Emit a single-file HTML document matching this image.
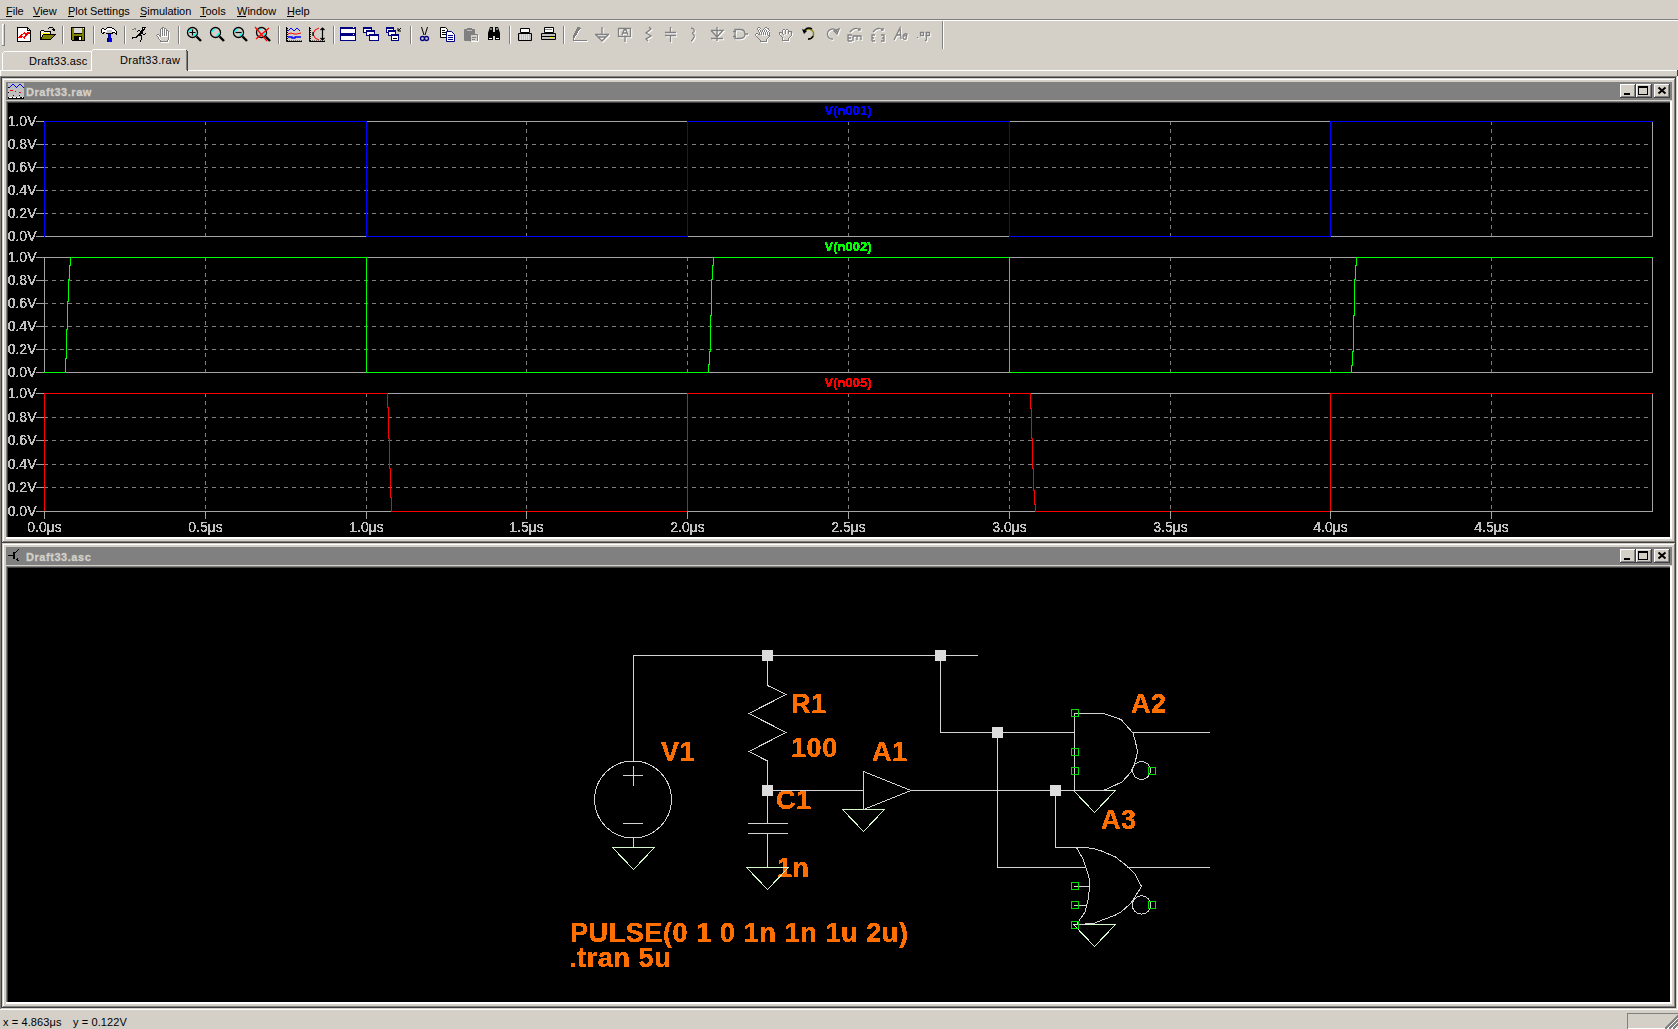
<!DOCTYPE html>
<html><head><meta charset="utf-8"><style>
html,body{margin:0;padding:0;background:#d4d0c8;overflow:hidden}
svg{display:block;font-family:"Liberation Sans",sans-serif}
text.c{filter:url(#crisp)}
text.c2{filter:url(#crisp2)}
</style></head><body>
<svg width="1678" height="1029" viewBox="0 0 1678 1029">
<defs><filter id="crisp" x="-5%" y="-20%" width="110%" height="140%"><feComponentTransfer><feFuncA type="discrete" tableValues="0 1 1 1"/></feComponentTransfer></filter><filter id="crisp2" x="-5%" y="-20%" width="110%" height="140%"><feComponentTransfer><feFuncA type="discrete" tableValues="0 0 0 1 1 1 1 1"/></feComponentTransfer></filter></defs>
<rect x="0" y="0" width="1678" height="1029" fill="#d4d0c8"/>
<text class="" x="6" y="15" font-size="11" fill="#000" font-weight="normal" text-anchor="start" >File</text>
<text class="" x="33" y="15" font-size="11" fill="#000" font-weight="normal" text-anchor="start" >View</text>
<text class="" x="68" y="15" font-size="11" fill="#000" font-weight="normal" text-anchor="start" >Plot Settings</text>
<text class="" x="140" y="15" font-size="11" fill="#000" font-weight="normal" text-anchor="start" >Simulation</text>
<text class="" x="200" y="15" font-size="11" fill="#000" font-weight="normal" text-anchor="start" >Tools</text>
<text class="" x="237" y="15" font-size="11" fill="#000" font-weight="normal" text-anchor="start" >Window</text>
<text class="" x="287" y="15" font-size="11" fill="#000" font-weight="normal" text-anchor="start" >Help</text>
<rect x="0" y="19" width="1678" height="1" fill="#808080"/>
<rect x="0" y="20" width="1678" height="1" fill="#ffffff"/>
<rect x="6" y="16" width="6" height="1" fill="#000"/>
<rect x="33" y="16" width="7" height="1" fill="#000"/>
<rect x="68" y="16" width="6" height="1" fill="#000"/>
<rect x="140" y="16" width="6" height="1" fill="#000"/>
<rect x="200" y="16" width="6" height="1" fill="#000"/>
<rect x="237" y="16" width="9" height="1" fill="#000"/>
<rect x="287" y="16" width="7" height="1" fill="#000"/>
<rect x="2" y="24" width="1" height="22" fill="#ffffff"/>
<rect x="2" y="24" width="2" height="1" fill="#ffffff"/>
<rect x="4" y="24" width="1" height="22" fill="#808080"/>
<rect x="2" y="45" width="3" height="1" fill="#808080"/>
<rect x="62" y="26" width="1" height="18" fill="#808080"/>
<rect x="63" y="26" width="1" height="18" fill="#ffffff"/>
<rect x="93" y="26" width="1" height="18" fill="#808080"/>
<rect x="94" y="26" width="1" height="18" fill="#ffffff"/>
<rect x="124" y="26" width="1" height="18" fill="#808080"/>
<rect x="125" y="26" width="1" height="18" fill="#ffffff"/>
<rect x="178" y="26" width="1" height="18" fill="#808080"/>
<rect x="179" y="26" width="1" height="18" fill="#ffffff"/>
<rect x="278" y="26" width="1" height="18" fill="#808080"/>
<rect x="279" y="26" width="1" height="18" fill="#ffffff"/>
<rect x="333" y="26" width="1" height="18" fill="#808080"/>
<rect x="334" y="26" width="1" height="18" fill="#ffffff"/>
<rect x="410" y="26" width="1" height="18" fill="#808080"/>
<rect x="411" y="26" width="1" height="18" fill="#ffffff"/>
<rect x="509" y="26" width="1" height="18" fill="#808080"/>
<rect x="510" y="26" width="1" height="18" fill="#ffffff"/>
<rect x="563" y="26" width="1" height="18" fill="#808080"/>
<rect x="564" y="26" width="1" height="18" fill="#ffffff"/>
<rect x="942" y="21" width="1" height="28" fill="#808080"/>
<rect x="943" y="21" width="1" height="28" fill="#ffffff"/>
<g transform="translate(16,26)"><rect x="1" y="1" width="11" height="1" fill="#000000"/><rect x="1" y="2" width="1" height="1" fill="#000000"/><rect x="2" y="2" width="9" height="1" fill="#fff"/><rect x="11" y="2" width="2" height="1" fill="#000000"/><rect x="1" y="3" width="1" height="1" fill="#000000"/><rect x="2" y="3" width="9" height="1" fill="#fff"/><rect x="11" y="3" width="1" height="1" fill="#000000"/><rect x="12" y="3" width="1" height="1" fill="#fff"/><rect x="13" y="3" width="1" height="1" fill="#000000"/><rect x="1" y="4" width="1" height="1" fill="#000000"/><rect x="2" y="4" width="9" height="1" fill="#fff"/><rect x="11" y="4" width="4" height="1" fill="#000000"/><rect x="1" y="5" width="1" height="1" fill="#000000"/><rect x="2" y="5" width="12" height="1" fill="#fff"/><rect x="14" y="5" width="1" height="1" fill="#000000"/><rect x="1" y="6" width="1" height="1" fill="#000000"/><rect x="2" y="6" width="6" height="1" fill="#fff"/><rect x="8" y="6" width="1" height="1" fill="#f00"/><rect x="9" y="6" width="2" height="1" fill="#fff"/><rect x="11" y="6" width="3" height="1" fill="#f00"/><rect x="14" y="6" width="1" height="1" fill="#000000"/><rect x="1" y="7" width="1" height="1" fill="#000000"/><rect x="2" y="7" width="5" height="1" fill="#fff"/><rect x="7" y="7" width="7" height="1" fill="#f00"/><rect x="14" y="7" width="1" height="1" fill="#000000"/><rect x="1" y="8" width="1" height="1" fill="#000000"/><rect x="2" y="8" width="3" height="1" fill="#fff"/><rect x="5" y="8" width="2" height="1" fill="#f00"/><rect x="7" y="8" width="2" height="1" fill="#fff"/><rect x="9" y="8" width="3" height="1" fill="#f00"/><rect x="12" y="8" width="2" height="1" fill="#fff"/><rect x="14" y="8" width="1" height="1" fill="#000000"/><rect x="1" y="9" width="1" height="1" fill="#000000"/><rect x="2" y="9" width="2" height="1" fill="#fff"/><rect x="4" y="9" width="2" height="1" fill="#f00"/><rect x="6" y="9" width="3" height="1" fill="#fff"/><rect x="9" y="9" width="2" height="1" fill="#f00"/><rect x="11" y="9" width="3" height="1" fill="#fff"/><rect x="14" y="9" width="1" height="1" fill="#000000"/><rect x="1" y="10" width="1" height="1" fill="#000000"/><rect x="2" y="10" width="1" height="1" fill="#fff"/><rect x="3" y="10" width="4" height="1" fill="#f00"/><rect x="7" y="10" width="1" height="1" fill="#fff"/><rect x="8" y="10" width="2" height="1" fill="#f00"/><rect x="10" y="10" width="4" height="1" fill="#fff"/><rect x="14" y="10" width="1" height="1" fill="#000000"/><rect x="1" y="11" width="1" height="1" fill="#000000"/><rect x="2" y="11" width="4" height="1" fill="#f00"/><rect x="6" y="11" width="1" height="1" fill="#fff"/><rect x="7" y="11" width="2" height="1" fill="#f00"/><rect x="9" y="11" width="5" height="1" fill="#fff"/><rect x="14" y="11" width="1" height="1" fill="#000000"/><rect x="1" y="12" width="1" height="1" fill="#000000"/><rect x="2" y="12" width="6" height="1" fill="#fff"/><rect x="8" y="12" width="1" height="1" fill="#f00"/><rect x="9" y="12" width="5" height="1" fill="#fff"/><rect x="14" y="12" width="1" height="1" fill="#000000"/><rect x="1" y="13" width="1" height="1" fill="#000000"/><rect x="2" y="13" width="12" height="1" fill="#fff"/><rect x="14" y="13" width="1" height="1" fill="#000000"/><rect x="1" y="14" width="1" height="1" fill="#000000"/><rect x="2" y="14" width="12" height="1" fill="#fff"/><rect x="14" y="14" width="1" height="1" fill="#000000"/><rect x="1" y="15" width="14" height="1" fill="#000000"/></g>
<g transform="translate(40,26)"><rect x="9" y="1" width="4" height="1" fill="#000000"/><rect x="8" y="2" width="1" height="1" fill="#000000"/><rect x="13" y="2" width="1" height="1" fill="#000000"/><rect x="12" y="3" width="3" height="1" fill="#000000"/><rect x="1" y="4" width="3" height="1" fill="#000000"/><rect x="13" y="4" width="2" height="1" fill="#000000"/><rect x="0" y="5" width="1" height="1" fill="#000000"/><rect x="1" y="5" width="1" height="1" fill="#ffff00"/><rect x="2" y="5" width="1" height="1" fill="#ffffff"/><rect x="3" y="5" width="1" height="1" fill="#ffff00"/><rect x="4" y="5" width="7" height="1" fill="#000000"/><rect x="0" y="6" width="1" height="1" fill="#000000"/><rect x="1" y="6" width="1" height="1" fill="#ffff00"/><rect x="2" y="6" width="1" height="1" fill="#ffffff"/><rect x="3" y="6" width="1" height="1" fill="#ffff00"/><rect x="4" y="6" width="1" height="1" fill="#ffffff"/><rect x="5" y="6" width="1" height="1" fill="#ffff00"/><rect x="6" y="6" width="1" height="1" fill="#ffffff"/><rect x="7" y="6" width="1" height="1" fill="#ffff00"/><rect x="8" y="6" width="1" height="1" fill="#ffffff"/><rect x="9" y="6" width="1" height="1" fill="#ffff00"/><rect x="10" y="6" width="1" height="1" fill="#000000"/><rect x="0" y="7" width="1" height="1" fill="#000000"/><rect x="1" y="7" width="1" height="1" fill="#ffffff"/><rect x="2" y="7" width="1" height="1" fill="#ffff00"/><rect x="3" y="7" width="1" height="1" fill="#ffffff"/><rect x="4" y="7" width="1" height="1" fill="#ffff00"/><rect x="5" y="7" width="1" height="1" fill="#ffffff"/><rect x="6" y="7" width="1" height="1" fill="#ffff00"/><rect x="7" y="7" width="1" height="1" fill="#ffffff"/><rect x="8" y="7" width="1" height="1" fill="#ffff00"/><rect x="9" y="7" width="1" height="1" fill="#ffffff"/><rect x="10" y="7" width="1" height="1" fill="#000000"/><rect x="0" y="8" width="1" height="1" fill="#000000"/><rect x="1" y="8" width="1" height="1" fill="#ffff00"/><rect x="2" y="8" width="1" height="1" fill="#ffffff"/><rect x="3" y="8" width="13" height="1" fill="#000000"/><rect x="0" y="9" width="1" height="1" fill="#000000"/><rect x="1" y="9" width="1" height="1" fill="#ffffff"/><rect x="2" y="9" width="1" height="1" fill="#000000"/><rect x="3" y="9" width="11" height="1" fill="#808000"/><rect x="14" y="9" width="1" height="1" fill="#000000"/><rect x="0" y="10" width="1" height="1" fill="#000000"/><rect x="1" y="10" width="1" height="1" fill="#ffff00"/><rect x="2" y="10" width="1" height="1" fill="#000000"/><rect x="3" y="10" width="10" height="1" fill="#808000"/><rect x="13" y="10" width="1" height="1" fill="#000000"/><rect x="0" y="11" width="2" height="1" fill="#000000"/><rect x="2" y="11" width="10" height="1" fill="#808000"/><rect x="12" y="11" width="1" height="1" fill="#000000"/><rect x="0" y="12" width="2" height="1" fill="#000000"/><rect x="2" y="12" width="9" height="1" fill="#808000"/><rect x="11" y="12" width="1" height="1" fill="#000000"/><rect x="0" y="13" width="11" height="1" fill="#000000"/></g>
<g transform="translate(70,26)"><rect x="1" y="1" width="14" height="1" fill="#000000"/><rect x="1" y="2" width="1" height="1" fill="#000000"/><rect x="2" y="2" width="2" height="1" fill="#808000"/><rect x="4" y="2" width="8" height="1" fill="#d8d8d8"/><rect x="12" y="2" width="1" height="1" fill="#808000"/><rect x="13" y="2" width="1" height="1" fill="#fff"/><rect x="14" y="2" width="1" height="1" fill="#000000"/><rect x="1" y="3" width="1" height="1" fill="#000000"/><rect x="2" y="3" width="2" height="1" fill="#808000"/><rect x="4" y="3" width="8" height="1" fill="#d8d8d8"/><rect x="12" y="3" width="2" height="1" fill="#808000"/><rect x="14" y="3" width="1" height="1" fill="#000000"/><rect x="1" y="4" width="1" height="1" fill="#000000"/><rect x="2" y="4" width="2" height="1" fill="#808000"/><rect x="4" y="4" width="8" height="1" fill="#d8d8d8"/><rect x="12" y="4" width="2" height="1" fill="#808000"/><rect x="14" y="4" width="1" height="1" fill="#000000"/><rect x="1" y="5" width="1" height="1" fill="#000000"/><rect x="2" y="5" width="2" height="1" fill="#808000"/><rect x="4" y="5" width="8" height="1" fill="#d8d8d8"/><rect x="12" y="5" width="2" height="1" fill="#808000"/><rect x="14" y="5" width="1" height="1" fill="#000000"/><rect x="1" y="6" width="1" height="1" fill="#000000"/><rect x="2" y="6" width="2" height="1" fill="#808000"/><rect x="4" y="6" width="8" height="1" fill="#d8d8d8"/><rect x="12" y="6" width="2" height="1" fill="#808000"/><rect x="14" y="6" width="1" height="1" fill="#000000"/><rect x="1" y="7" width="1" height="1" fill="#000000"/><rect x="2" y="7" width="2" height="1" fill="#808000"/><rect x="4" y="7" width="8" height="1" fill="#000000"/><rect x="12" y="7" width="2" height="1" fill="#808000"/><rect x="14" y="7" width="1" height="1" fill="#000000"/><rect x="1" y="8" width="1" height="1" fill="#000000"/><rect x="2" y="8" width="12" height="1" fill="#808000"/><rect x="14" y="8" width="1" height="1" fill="#000000"/><rect x="1" y="9" width="1" height="1" fill="#000000"/><rect x="2" y="9" width="12" height="1" fill="#808000"/><rect x="14" y="9" width="1" height="1" fill="#000000"/><rect x="1" y="10" width="1" height="1" fill="#000000"/><rect x="2" y="10" width="2" height="1" fill="#808000"/><rect x="4" y="10" width="8" height="1" fill="#000000"/><rect x="12" y="10" width="2" height="1" fill="#808000"/><rect x="14" y="10" width="1" height="1" fill="#000000"/><rect x="1" y="11" width="1" height="1" fill="#000000"/><rect x="2" y="11" width="2" height="1" fill="#808000"/><rect x="4" y="11" width="5" height="1" fill="#000000"/><rect x="9" y="11" width="2" height="1" fill="#fff"/><rect x="11" y="11" width="1" height="1" fill="#000000"/><rect x="12" y="11" width="2" height="1" fill="#808000"/><rect x="14" y="11" width="1" height="1" fill="#000000"/><rect x="1" y="12" width="1" height="1" fill="#000000"/><rect x="2" y="12" width="2" height="1" fill="#808000"/><rect x="4" y="12" width="5" height="1" fill="#000000"/><rect x="9" y="12" width="2" height="1" fill="#fff"/><rect x="11" y="12" width="1" height="1" fill="#000000"/><rect x="12" y="12" width="2" height="1" fill="#808000"/><rect x="14" y="12" width="1" height="1" fill="#000000"/><rect x="1" y="13" width="1" height="1" fill="#000000"/><rect x="2" y="13" width="2" height="1" fill="#808000"/><rect x="4" y="13" width="5" height="1" fill="#000000"/><rect x="9" y="13" width="2" height="1" fill="#fff"/><rect x="11" y="13" width="1" height="1" fill="#000000"/><rect x="12" y="13" width="2" height="1" fill="#808000"/><rect x="14" y="13" width="1" height="1" fill="#000000"/><rect x="2" y="14" width="13" height="1" fill="#000000"/></g>
<g transform="translate(99,25)"><rect x="8" y="2" width="5" height="1" fill="#000000"/><rect x="3" y="3" width="2" height="1" fill="#000000"/><rect x="7" y="3" width="1" height="1" fill="#000000"/><rect x="8" y="3" width="5" height="1" fill="#fff"/><rect x="13" y="3" width="2" height="1" fill="#000000"/><rect x="2" y="4" width="1" height="1" fill="#000000"/><rect x="3" y="4" width="2" height="1" fill="#fff"/><rect x="5" y="4" width="2" height="1" fill="#000000"/><rect x="7" y="4" width="8" height="1" fill="#fff"/><rect x="15" y="4" width="1" height="1" fill="#000000"/><rect x="2" y="5" width="1" height="1" fill="#000000"/><rect x="3" y="5" width="5" height="1" fill="#fff"/><rect x="8" y="5" width="5" height="1" fill="#c8c8c8"/><rect x="13" y="5" width="3" height="1" fill="#fff"/><rect x="16" y="5" width="1" height="1" fill="#000000"/><rect x="2" y="6" width="1" height="1" fill="#000000"/><rect x="3" y="6" width="5" height="1" fill="#fff"/><rect x="8" y="6" width="5" height="1" fill="#c8c8c8"/><rect x="13" y="6" width="4" height="1" fill="#fff"/><rect x="17" y="6" width="1" height="1" fill="#000000"/><rect x="2" y="7" width="1" height="1" fill="#000000"/><rect x="3" y="7" width="1" height="1" fill="#fff"/><rect x="4" y="7" width="2" height="1" fill="#000000"/><rect x="6" y="7" width="7" height="1" fill="#c8c8c8"/><rect x="13" y="7" width="3" height="1" fill="#000000"/><rect x="16" y="7" width="1" height="1" fill="#fff"/><rect x="17" y="7" width="1" height="1" fill="#000000"/><rect x="3" y="8" width="2" height="1" fill="#000000"/><rect x="7" y="8" width="7" height="1" fill="#000000"/><rect x="16" y="8" width="2" height="1" fill="#000000"/><rect x="9" y="9" width="1" height="1" fill="#000080"/><rect x="10" y="9" width="2" height="1" fill="#0000ff"/><rect x="17" y="9" width="1" height="1" fill="#000000"/><rect x="9" y="10" width="1" height="1" fill="#000080"/><rect x="10" y="10" width="2" height="1" fill="#0000ff"/><rect x="9" y="11" width="1" height="1" fill="#000080"/><rect x="10" y="11" width="2" height="1" fill="#0000ff"/><rect x="9" y="12" width="1" height="1" fill="#000080"/><rect x="10" y="12" width="2" height="1" fill="#0000ff"/><rect x="8" y="13" width="2" height="1" fill="#000080"/><rect x="10" y="13" width="3" height="1" fill="#0000ff"/><rect x="8" y="14" width="2" height="1" fill="#000080"/><rect x="10" y="14" width="3" height="1" fill="#0000ff"/><rect x="8" y="15" width="2" height="1" fill="#000080"/><rect x="10" y="15" width="3" height="1" fill="#0000ff"/><rect x="8" y="16" width="2" height="1" fill="#000080"/><rect x="10" y="16" width="3" height="1" fill="#0000ff"/></g>
<g transform="translate(130,25)"><rect x="12" y="2" width="4" height="1" fill="#000000"/><rect x="4" y="3" width="2" height="1" fill="#808080"/><rect x="12" y="3" width="1" height="1" fill="#000000"/><rect x="13" y="3" width="1" height="1" fill="#fff"/><rect x="14" y="3" width="1" height="1" fill="#000000"/><rect x="2" y="4" width="2" height="1" fill="#808080"/><rect x="5" y="4" width="1" height="1" fill="#808080"/><rect x="12" y="4" width="3" height="1" fill="#000000"/><rect x="8" y="5" width="2" height="1" fill="#000000"/><rect x="11" y="5" width="3" height="1" fill="#000000"/><rect x="7" y="6" width="1" height="1" fill="#000000"/><rect x="10" y="6" width="3" height="1" fill="#000000"/><rect x="10" y="7" width="3" height="1" fill="#000000"/><rect x="9" y="8" width="4" height="1" fill="#000000"/><rect x="15" y="8" width="1" height="1" fill="#000000"/><rect x="8" y="9" width="3" height="1" fill="#000000"/><rect x="13" y="9" width="2" height="1" fill="#000000"/><rect x="7" y="10" width="5" height="1" fill="#000000"/><rect x="6" y="11" width="2" height="1" fill="#000000"/><rect x="11" y="11" width="1" height="1" fill="#000000"/><rect x="2" y="12" width="5" height="1" fill="#000000"/><rect x="11" y="12" width="1" height="1" fill="#000000"/><rect x="2" y="13" width="1" height="1" fill="#000000"/><rect x="11" y="13" width="1" height="1" fill="#000000"/><rect x="11" y="14" width="1" height="1" fill="#000000"/><rect x="10" y="15" width="1" height="1" fill="#000000"/><rect x="10" y="16" width="1" height="1" fill="#000000"/></g>
<g transform="translate(152,25)"><rect x="10" y="2" width="2" height="1" fill="#808080"/><rect x="9" y="3" width="2" height="1" fill="#808080"/><rect x="11" y="3" width="1" height="1" fill="#ffffff"/><rect x="12" y="3" width="2" height="1" fill="#808080"/><rect x="8" y="4" width="1" height="1" fill="#808080"/><rect x="9" y="4" width="1" height="1" fill="#ffffff"/><rect x="10" y="4" width="1" height="1" fill="#808080"/><rect x="11" y="4" width="1" height="1" fill="#ffffff"/><rect x="12" y="4" width="1" height="1" fill="#808080"/><rect x="13" y="4" width="1" height="1" fill="#ffffff"/><rect x="14" y="4" width="1" height="1" fill="#808080"/><rect x="8" y="5" width="1" height="1" fill="#808080"/><rect x="9" y="5" width="1" height="1" fill="#ffffff"/><rect x="10" y="5" width="1" height="1" fill="#808080"/><rect x="11" y="5" width="1" height="1" fill="#ffffff"/><rect x="12" y="5" width="1" height="1" fill="#808080"/><rect x="13" y="5" width="1" height="1" fill="#ffffff"/><rect x="14" y="5" width="2" height="1" fill="#808080"/><rect x="8" y="6" width="1" height="1" fill="#808080"/><rect x="9" y="6" width="1" height="1" fill="#ffffff"/><rect x="10" y="6" width="1" height="1" fill="#808080"/><rect x="11" y="6" width="1" height="1" fill="#ffffff"/><rect x="12" y="6" width="1" height="1" fill="#808080"/><rect x="13" y="6" width="1" height="1" fill="#ffffff"/><rect x="14" y="6" width="1" height="1" fill="#808080"/><rect x="15" y="6" width="1" height="1" fill="#ffffff"/><rect x="16" y="6" width="1" height="1" fill="#808080"/><rect x="8" y="7" width="1" height="1" fill="#808080"/><rect x="9" y="7" width="1" height="1" fill="#ffffff"/><rect x="10" y="7" width="1" height="1" fill="#808080"/><rect x="11" y="7" width="1" height="1" fill="#ffffff"/><rect x="12" y="7" width="1" height="1" fill="#808080"/><rect x="13" y="7" width="1" height="1" fill="#ffffff"/><rect x="14" y="7" width="1" height="1" fill="#808080"/><rect x="15" y="7" width="1" height="1" fill="#ffffff"/><rect x="16" y="7" width="1" height="1" fill="#808080"/><rect x="17" y="7" width="1" height="1" fill="#ffffff"/><rect x="8" y="8" width="1" height="1" fill="#808080"/><rect x="9" y="8" width="1" height="1" fill="#ffffff"/><rect x="10" y="8" width="1" height="1" fill="#808080"/><rect x="11" y="8" width="1" height="1" fill="#ffffff"/><rect x="12" y="8" width="1" height="1" fill="#808080"/><rect x="13" y="8" width="1" height="1" fill="#ffffff"/><rect x="14" y="8" width="1" height="1" fill="#808080"/><rect x="15" y="8" width="1" height="1" fill="#ffffff"/><rect x="16" y="8" width="1" height="1" fill="#808080"/><rect x="17" y="8" width="1" height="1" fill="#ffffff"/><rect x="5" y="9" width="2" height="1" fill="#808080"/><rect x="8" y="9" width="1" height="1" fill="#808080"/><rect x="9" y="9" width="1" height="1" fill="#ffffff"/><rect x="10" y="9" width="1" height="1" fill="#808080"/><rect x="11" y="9" width="1" height="1" fill="#ffffff"/><rect x="12" y="9" width="1" height="1" fill="#808080"/><rect x="13" y="9" width="1" height="1" fill="#ffffff"/><rect x="14" y="9" width="1" height="1" fill="#808080"/><rect x="15" y="9" width="1" height="1" fill="#ffffff"/><rect x="16" y="9" width="1" height="1" fill="#808080"/><rect x="17" y="9" width="1" height="1" fill="#ffffff"/><rect x="4" y="10" width="1" height="1" fill="#808080"/><rect x="5" y="10" width="2" height="1" fill="#ffffff"/><rect x="7" y="10" width="2" height="1" fill="#808080"/><rect x="9" y="10" width="1" height="1" fill="#ffffff"/><rect x="10" y="10" width="1" height="1" fill="#808080"/><rect x="11" y="10" width="1" height="1" fill="#ffffff"/><rect x="12" y="10" width="1" height="1" fill="#808080"/><rect x="13" y="10" width="1" height="1" fill="#ffffff"/><rect x="14" y="10" width="1" height="1" fill="#808080"/><rect x="15" y="10" width="1" height="1" fill="#ffffff"/><rect x="16" y="10" width="1" height="1" fill="#808080"/><rect x="17" y="10" width="1" height="1" fill="#ffffff"/><rect x="5" y="11" width="1" height="1" fill="#808080"/><rect x="6" y="11" width="1" height="1" fill="#ffffff"/><rect x="8" y="11" width="1" height="1" fill="#808080"/><rect x="9" y="11" width="7" height="1" fill="#ffffff"/><rect x="16" y="11" width="1" height="1" fill="#808080"/><rect x="17" y="11" width="1" height="1" fill="#ffffff"/><rect x="6" y="12" width="1" height="1" fill="#808080"/><rect x="7" y="12" width="1" height="1" fill="#ffffff"/><rect x="16" y="12" width="1" height="1" fill="#808080"/><rect x="17" y="12" width="1" height="1" fill="#ffffff"/><rect x="6" y="13" width="1" height="1" fill="#808080"/><rect x="7" y="13" width="1" height="1" fill="#ffffff"/><rect x="16" y="13" width="1" height="1" fill="#808080"/><rect x="17" y="13" width="1" height="1" fill="#ffffff"/><rect x="7" y="14" width="1" height="1" fill="#808080"/><rect x="8" y="14" width="1" height="1" fill="#ffffff"/><rect x="16" y="14" width="1" height="1" fill="#808080"/><rect x="17" y="14" width="1" height="1" fill="#ffffff"/><rect x="8" y="15" width="1" height="1" fill="#808080"/><rect x="15" y="15" width="1" height="1" fill="#808080"/><rect x="16" y="15" width="1" height="1" fill="#ffffff"/><rect x="8" y="16" width="8" height="1" fill="#808080"/><rect x="16" y="16" width="1" height="1" fill="#ffffff"/><rect x="9" y="17" width="8" height="1" fill="#ffffff"/></g>
<g transform="translate(186,26)"><circle cx="6.5" cy="6.5" r="5" stroke="#000" stroke-width="1.3" fill="none"/><path d="M5.5 3 L2.5 6 M10.5 7 L7.5 10" stroke="#00ffff" stroke-width="1.4" fill="none"/><path d="M10.5 10.5 L15 15" stroke="#000" stroke-width="2.4"/><path d="M6.5 3.5 V9.5 M3.5 6.5 H9.5" stroke="#000" stroke-width="1.2"/></g>
<g transform="translate(209,26)"><circle cx="6.5" cy="6.5" r="5" stroke="#000" stroke-width="1.3" fill="none"/><path d="M5.5 3 L2.5 6 M10.5 7 L7.5 10" stroke="#00ffff" stroke-width="1.4" fill="none"/><path d="M10.5 10.5 L15 15" stroke="#000" stroke-width="2.4"/></g>
<g transform="translate(232,26)"><circle cx="6.5" cy="6.5" r="5" stroke="#000" stroke-width="1.3" fill="none"/><path d="M5.5 3 L2.5 6 M10.5 7 L7.5 10" stroke="#00ffff" stroke-width="1.4" fill="none"/><path d="M10.5 10.5 L15 15" stroke="#000" stroke-width="2.4"/><path d="M3.5 6.5 H9.5" stroke="#000" stroke-width="1.2"/></g>
<g transform="translate(255,26)"><circle cx="6.5" cy="6.5" r="5" stroke="#000" stroke-width="1.3" fill="none"/><path d="M5.5 3 L2.5 6 M10.5 7 L7.5 10" stroke="#00ffff" stroke-width="1.4" fill="none"/><path d="M10.5 10.5 L15 15" stroke="#000" stroke-width="2.4"/><path d="M0 1 L12 15 M14 2 L1 13" stroke="#f00" stroke-width="1.2"/></g>
<g transform="translate(286,26)"><path d="M0.5 1 V15.5 H16" stroke="#000" stroke-width="1" fill="none"/><path d="M1.5 2 V15 M1.5 4 H2 M1 15 H16" stroke="#000" stroke-width="1" stroke-dasharray="1 1" fill="none"/><path d="M2 5 L5 2 L8 5 L11 2 L14 5" stroke="#00f" stroke-width="1" fill="none"/><path d="M2 8 L5 7 L8 8 L11 8 L15 7" stroke="#f00" stroke-width="1" fill="none"/><path d="M2 11 H6 V12 H9 V11 H15" stroke="#00f" stroke-width="1.3" fill="none"/></g>
<g transform="translate(309,26)"><path d="M0.5 1 V15.5 H16" stroke="#000" stroke-width="1" fill="none"/><path d="M1.5 2 V15 M1 15 H16" stroke="#000" stroke-width="1" stroke-dasharray="1 1" fill="none"/><path d="M10 2 L6 4 L4 8 L6 12 L10 14" stroke="#f00" stroke-width="1" fill="none"/><path d="M13.5 2 V14 M11.5 4 L13.5 2 L15.5 4 M11.5 12 L13.5 14 L15.5 12 M4 6 V10" stroke="#000" stroke-width="1.2" fill="none"/></g>
<g transform="translate(340,26)"><rect x="0.5" y="1.5" width="15" height="6" stroke="#000080" fill="#fff"/><rect x="0" y="1" width="16" height="2" fill="#000080"/><rect x="0.5" y="8.5" width="15" height="6" stroke="#000080" fill="#fff"/><rect x="0" y="8" width="16" height="2" fill="#000080"/><rect x="13" y="1" width="1" height="1" fill="#fff"/><rect x="13" y="8" width="1" height="1" fill="#fff"/></g>
<g transform="translate(363,26)"><rect x="0.5" y="1.5" width="8" height="5" stroke="#000080" stroke-width="1" fill="#fff"/><rect x="0" y="1" width="9" height="2" fill="#000080"/><rect x="3.5" y="4.5" width="8" height="5" stroke="#000080" stroke-width="1" fill="#fff"/><rect x="3" y="4" width="9" height="2" fill="#000080"/><rect x="6.5" y="8.5" width="9" height="6" stroke="#000080" stroke-width="1" fill="#fff"/><rect x="6" y="8" width="10" height="2" fill="#000080"/></g>
<g transform="translate(386,26)"><rect x="0.5" y="1.5" width="7" height="5" stroke="#000080" stroke-width="1" fill="#fff"/><rect x="0" y="1" width="8" height="2" fill="#000080"/><rect x="2.5" y="4.5" width="7" height="5" stroke="#000080" stroke-width="1" fill="#fff"/><rect x="2" y="4" width="8" height="2" fill="#000080"/><rect x="5.5" y="8.5" width="7" height="6" stroke="#000080" stroke-width="1" fill="#fff"/><rect x="5" y="8" width="8" height="2" fill="#000080"/><rect x="7" y="12" width="4" height="1" fill="#000"/><path d="M12 5 L15 2 M12 2 V5 H15" stroke="#000" stroke-width="1" fill="none"/></g>
<g transform="translate(417,26)"><path d="M4.5 1 L7 9 M10.5 1 L8 9" stroke="#000" stroke-width="1"/><circle cx="5.5" cy="12.5" r="2" stroke="#000080" stroke-width="1.3" fill="none"/><circle cx="9.5" cy="12.5" r="2" stroke="#000080" stroke-width="1.3" fill="none"/></g>
<g transform="translate(440,26)"><path d="M0.5 1.5 H5.5 L7.5 3.5 V11.5 H0.5 Z" stroke="#000" fill="#fff"/><path d="M2 4.5 H5 M2 6.5 H6 M2 8.5 H6" stroke="#000"/><path d="M6.5 5.5 H11.5 L14.5 8.5 V15.5 H6.5 Z" stroke="#000080" fill="#fff"/><path d="M8 9.5 H13 M8 11.5 H13 M8 13.5 H13" stroke="#000080"/></g>
<g transform="translate(463,26)"><rect x="1" y="3" width="11" height="12" rx="1" fill="#808080"/><rect x="4" y="2" width="5" height="2" fill="#808080"/><path d="M4 4.5 H9" stroke="#c0c0c0"/><path d="M7.5 8.5 H14.5 V15.5 H7.5 Z" stroke="#808080" fill="#d4d0c8"/><path d="M9 11.5 H13 M9 13.5 H12" stroke="#808080"/><path d="M8 15.5 H15.5 V9" stroke="#fff" fill="none"/></g>
<g transform="translate(486,26)"><path d="M2 7 L4 1 H7 V6 H9 V1 H12 L14 7 V14 H9 V10 H7 V14 H2 Z" fill="#000"/><rect x="4" y="2" width="2" height="2" fill="#808080"/><rect x="10" y="2" width="2" height="2" fill="#808080"/><rect x="3" y="12" width="3" height="1" fill="#fff"/><rect x="10" y="12" width="3" height="1" fill="#fff"/></g>
<g transform="translate(517,26)"><path d="M3.5 2.5 H12.5 V6.5 H3.5 Z" stroke="#000" fill="#fff"/><path d="M1.5 7.5 H14.5 V14.5 H1.5 Z" stroke="#000" fill="#c0c0c0"/><path d="M3 9 H13 M3 11 H13 M3 13 H13" stroke="#fff" stroke-dasharray="1 1"/></g>
<g transform="translate(540,26)"><path d="M4.5 1.5 H13.5 V6.5 H4.5 Z" stroke="#000" fill="#fff"/><path d="M5 3.5 H12" stroke="#808080"/><path d="M1.5 7.5 H15.5 V13.5 H1.5 Z" stroke="#000" fill="#c0c0c0"/><path d="M2 10.5 H15" stroke="#000"/><rect x="10" y="11" width="3" height="1" fill="#ff0"/></g>
<g transform="translate(569,25)"><rect x="8" y="2" width="3" height="1" fill="#808080"/><rect x="8" y="3" width="4" height="1" fill="#808080"/><rect x="7" y="4" width="4" height="1" fill="#808080"/><rect x="11" y="4" width="1" height="1" fill="#ffffff"/><rect x="7" y="5" width="3" height="1" fill="#808080"/><rect x="10" y="5" width="1" height="1" fill="#ffffff"/><rect x="6" y="6" width="3" height="1" fill="#808080"/><rect x="9" y="6" width="1" height="1" fill="#ffffff"/><rect x="6" y="7" width="3" height="1" fill="#808080"/><rect x="9" y="7" width="1" height="1" fill="#ffffff"/><rect x="5" y="8" width="3" height="1" fill="#808080"/><rect x="8" y="8" width="1" height="1" fill="#ffffff"/><rect x="5" y="9" width="3" height="1" fill="#808080"/><rect x="8" y="9" width="1" height="1" fill="#ffffff"/><rect x="4" y="10" width="3" height="1" fill="#808080"/><rect x="7" y="10" width="1" height="1" fill="#ffffff"/><rect x="4" y="11" width="2" height="1" fill="#808080"/><rect x="6" y="11" width="1" height="1" fill="#ffffff"/><rect x="4" y="12" width="2" height="1" fill="#808080"/><rect x="6" y="12" width="1" height="1" fill="#ffffff"/><rect x="4" y="13" width="1" height="1" fill="#808080"/><rect x="5" y="13" width="1" height="1" fill="#ffffff"/><rect x="4" y="14" width="1" height="1" fill="#808080"/><rect x="5" y="14" width="1" height="1" fill="#ffffff"/><rect x="4" y="15" width="14" height="1" fill="#808080"/><rect x="5" y="16" width="14" height="1" fill="#ffffff"/></g>
<g transform="translate(594,26)"><g transform="translate(1,1)"><path d="M8 1 V8 M1 8.5 H15 M2 9 L8 15 L14 9 M4 11 H12" stroke="#fff" stroke-width="1.3" fill="none"/></g><path d="M8 1 V8 M1 8.5 H15 M2 9 L8 15 L14 9 M4 11 H12" stroke="#808080" stroke-width="1.3" fill="none"/></g>
<g transform="translate(617,26)"><g transform="translate(1,1)"><path d="M1.5 2.5 H13.5 V10.5 H1.5 Z M8 11 V16 M5 9 L7 4 H9 L11 9 M6 7 H10" stroke="#fff" stroke-width="1.3" fill="none"/></g><path d="M1.5 2.5 H13.5 V10.5 H1.5 Z M8 11 V16 M5 9 L7 4 H9 L11 9 M6 7 H10" stroke="#808080" stroke-width="1.3" fill="none"/></g>
<g transform="translate(640,26)"><g transform="translate(1,1)"><path d="M9 1 L11 3 L6 7 L11 10 L6 13 L8 15" stroke="#fff" stroke-width="1.3" fill="none"/></g><path d="M9 1 L11 3 L6 7 L11 10 L6 13 L8 15" stroke="#808080" stroke-width="1.3" fill="none"/></g>
<g transform="translate(663,26)"><g transform="translate(1,1)"><path d="M7.5 1 V6 M2 6.5 H13 M2 9.5 H13 M7.5 10 V16" stroke="#fff" stroke-width="1.3" fill="none"/></g><path d="M7.5 1 V6 M2 6.5 H13 M2 9.5 H13 M7.5 10 V16" stroke="#808080" stroke-width="1.3" fill="none"/></g>
<g transform="translate(686,26)"><g transform="translate(1,1)"><path d="M5 2 Q9 3 8 6 Q5 7 8 9 Q9 11 7 13 Q6 15 5 15" stroke="#fff" stroke-width="1.3" fill="none"/></g><path d="M5 2 Q9 3 8 6 Q5 7 8 9 Q9 11 7 13 Q6 15 5 15" stroke="#808080" stroke-width="1.3" fill="none"/></g>
<g transform="translate(709,26)"><g transform="translate(1,1)"><path d="M8 1 V15 M2 4.5 H14 L8 11 L2 4.5 M2 12.5 H14" stroke="#fff" stroke-width="1.3" fill="none"/></g><path d="M8 1 V15 M2 4.5 H14 L8 11 L2 4.5 M2 12.5 H14" stroke="#808080" stroke-width="1.3" fill="none"/></g>
<g transform="translate(732,26)"><g transform="translate(1,1)"><path d="M1 5.5 H4 M1 10.5 H4 M3 3.5 H8 Q13 3.5 13 8 Q13 12.5 8 12.5 H3 Z M13 8 H16" stroke="#fff" stroke-width="1.3" fill="none"/></g><path d="M1 5.5 H4 M1 10.5 H4 M3 3.5 H8 Q13 3.5 13 8 Q13 12.5 8 12.5 H3 Z M13 8 H16" stroke="#808080" stroke-width="1.3" fill="none"/></g>
<g transform="translate(753,25)"><rect x="5" y="2" width="2" height="1" fill="#808080"/><rect x="12" y="2" width="2" height="1" fill="#808080"/><rect x="4" y="3" width="1" height="1" fill="#808080"/><rect x="5" y="3" width="2" height="1" fill="#ffffff"/><rect x="7" y="3" width="1" height="1" fill="#808080"/><rect x="11" y="3" width="1" height="1" fill="#808080"/><rect x="12" y="3" width="2" height="1" fill="#ffffff"/><rect x="14" y="3" width="2" height="1" fill="#808080"/><rect x="4" y="4" width="1" height="1" fill="#808080"/><rect x="5" y="4" width="1" height="1" fill="#ffffff"/><rect x="6" y="4" width="1" height="1" fill="#808080"/><rect x="7" y="4" width="1" height="1" fill="#ffffff"/><rect x="10" y="4" width="1" height="1" fill="#808080"/><rect x="11" y="4" width="1" height="1" fill="#ffffff"/><rect x="12" y="4" width="1" height="1" fill="#808080"/><rect x="13" y="4" width="2" height="1" fill="#ffffff"/><rect x="15" y="4" width="1" height="1" fill="#808080"/><rect x="5" y="5" width="1" height="1" fill="#808080"/><rect x="6" y="5" width="1" height="1" fill="#ffffff"/><rect x="7" y="5" width="1" height="1" fill="#808080"/><rect x="9" y="5" width="1" height="1" fill="#808080"/><rect x="10" y="5" width="1" height="1" fill="#ffffff"/><rect x="11" y="5" width="1" height="1" fill="#808080"/><rect x="12" y="5" width="1" height="1" fill="#ffffff"/><rect x="13" y="5" width="1" height="1" fill="#808080"/><rect x="14" y="5" width="2" height="1" fill="#ffffff"/><rect x="16" y="5" width="1" height="1" fill="#808080"/><rect x="5" y="6" width="1" height="1" fill="#808080"/><rect x="6" y="6" width="1" height="1" fill="#ffffff"/><rect x="7" y="6" width="1" height="1" fill="#808080"/><rect x="9" y="6" width="1" height="1" fill="#808080"/><rect x="10" y="6" width="1" height="1" fill="#ffffff"/><rect x="11" y="6" width="1" height="1" fill="#808080"/><rect x="12" y="6" width="1" height="1" fill="#ffffff"/><rect x="13" y="6" width="1" height="1" fill="#808080"/><rect x="14" y="6" width="1" height="1" fill="#ffffff"/><rect x="15" y="6" width="1" height="1" fill="#808080"/><rect x="16" y="6" width="1" height="1" fill="#ffffff"/><rect x="6" y="7" width="1" height="1" fill="#808080"/><rect x="7" y="7" width="1" height="1" fill="#ffffff"/><rect x="8" y="7" width="1" height="1" fill="#808080"/><rect x="9" y="7" width="1" height="1" fill="#ffffff"/><rect x="10" y="7" width="1" height="1" fill="#808080"/><rect x="11" y="7" width="1" height="1" fill="#ffffff"/><rect x="12" y="7" width="1" height="1" fill="#808080"/><rect x="13" y="7" width="1" height="1" fill="#ffffff"/><rect x="14" y="7" width="1" height="1" fill="#808080"/><rect x="15" y="7" width="1" height="1" fill="#ffffff"/><rect x="16" y="7" width="1" height="1" fill="#808080"/><rect x="3" y="8" width="2" height="1" fill="#808080"/><rect x="6" y="8" width="1" height="1" fill="#808080"/><rect x="7" y="8" width="1" height="1" fill="#ffffff"/><rect x="8" y="8" width="1" height="1" fill="#808080"/><rect x="9" y="8" width="1" height="1" fill="#ffffff"/><rect x="10" y="8" width="1" height="1" fill="#808080"/><rect x="11" y="8" width="1" height="1" fill="#ffffff"/><rect x="12" y="8" width="1" height="1" fill="#808080"/><rect x="13" y="8" width="1" height="1" fill="#ffffff"/><rect x="14" y="8" width="1" height="1" fill="#808080"/><rect x="15" y="8" width="1" height="1" fill="#ffffff"/><rect x="16" y="8" width="1" height="1" fill="#808080"/><rect x="2" y="9" width="1" height="1" fill="#808080"/><rect x="3" y="9" width="2" height="1" fill="#ffffff"/><rect x="5" y="9" width="2" height="1" fill="#808080"/><rect x="8" y="9" width="1" height="1" fill="#808080"/><rect x="9" y="9" width="1" height="1" fill="#ffffff"/><rect x="10" y="9" width="1" height="1" fill="#808080"/><rect x="11" y="9" width="1" height="1" fill="#ffffff"/><rect x="12" y="9" width="1" height="1" fill="#808080"/><rect x="13" y="9" width="1" height="1" fill="#ffffff"/><rect x="14" y="9" width="1" height="1" fill="#808080"/><rect x="15" y="9" width="1" height="1" fill="#ffffff"/><rect x="16" y="9" width="1" height="1" fill="#808080"/><rect x="2" y="10" width="1" height="1" fill="#808080"/><rect x="3" y="10" width="1" height="1" fill="#ffffff"/><rect x="9" y="10" width="1" height="1" fill="#ffffff"/><rect x="11" y="10" width="1" height="1" fill="#ffffff"/><rect x="13" y="10" width="1" height="1" fill="#ffffff"/><rect x="15" y="10" width="2" height="1" fill="#808080"/><rect x="3" y="11" width="1" height="1" fill="#808080"/><rect x="16" y="11" width="1" height="1" fill="#808080"/><rect x="4" y="12" width="1" height="1" fill="#808080"/><rect x="15" y="12" width="1" height="1" fill="#808080"/><rect x="16" y="12" width="1" height="1" fill="#ffffff"/><rect x="5" y="13" width="1" height="1" fill="#808080"/><rect x="14" y="13" width="1" height="1" fill="#808080"/><rect x="15" y="13" width="1" height="1" fill="#ffffff"/><rect x="6" y="14" width="1" height="1" fill="#808080"/><rect x="13" y="14" width="1" height="1" fill="#808080"/><rect x="14" y="14" width="1" height="1" fill="#ffffff"/><rect x="7" y="15" width="1" height="1" fill="#808080"/><rect x="13" y="15" width="1" height="1" fill="#808080"/><rect x="14" y="15" width="1" height="1" fill="#ffffff"/><rect x="7" y="16" width="7" height="1" fill="#808080"/><rect x="14" y="16" width="1" height="1" fill="#ffffff"/><rect x="8" y="17" width="7" height="1" fill="#ffffff"/></g>
<g transform="translate(776,25)"><rect x="7" y="4" width="2" height="1" fill="#808080"/><rect x="10" y="4" width="2" height="1" fill="#808080"/><rect x="6" y="5" width="1" height="1" fill="#808080"/><rect x="7" y="5" width="2" height="1" fill="#ffffff"/><rect x="9" y="5" width="1" height="1" fill="#808080"/><rect x="10" y="5" width="2" height="1" fill="#ffffff"/><rect x="12" y="5" width="1" height="1" fill="#808080"/><rect x="6" y="6" width="1" height="1" fill="#808080"/><rect x="7" y="6" width="1" height="1" fill="#ffffff"/><rect x="9" y="6" width="1" height="1" fill="#808080"/><rect x="10" y="6" width="1" height="1" fill="#ffffff"/><rect x="12" y="6" width="4" height="1" fill="#808080"/><rect x="3" y="7" width="4" height="1" fill="#808080"/><rect x="7" y="7" width="1" height="1" fill="#ffffff"/><rect x="9" y="7" width="1" height="1" fill="#808080"/><rect x="10" y="7" width="1" height="1" fill="#ffffff"/><rect x="12" y="7" width="1" height="1" fill="#808080"/><rect x="13" y="7" width="1" height="1" fill="#ffffff"/><rect x="15" y="7" width="1" height="1" fill="#808080"/><rect x="3" y="8" width="1" height="1" fill="#808080"/><rect x="4" y="8" width="1" height="1" fill="#ffffff"/><rect x="6" y="8" width="1" height="1" fill="#808080"/><rect x="7" y="8" width="1" height="1" fill="#ffffff"/><rect x="9" y="8" width="1" height="1" fill="#808080"/><rect x="10" y="8" width="1" height="1" fill="#ffffff"/><rect x="12" y="8" width="1" height="1" fill="#808080"/><rect x="13" y="8" width="1" height="1" fill="#ffffff"/><rect x="15" y="8" width="1" height="1" fill="#808080"/><rect x="16" y="8" width="1" height="1" fill="#ffffff"/><rect x="3" y="9" width="1" height="1" fill="#808080"/><rect x="4" y="9" width="1" height="1" fill="#ffffff"/><rect x="7" y="9" width="1" height="1" fill="#808080"/><rect x="10" y="9" width="1" height="1" fill="#ffffff"/><rect x="15" y="9" width="1" height="1" fill="#808080"/><rect x="16" y="9" width="1" height="1" fill="#ffffff"/><rect x="4" y="10" width="1" height="1" fill="#808080"/><rect x="8" y="10" width="1" height="1" fill="#ffffff"/><rect x="15" y="10" width="1" height="1" fill="#808080"/><rect x="16" y="10" width="1" height="1" fill="#ffffff"/><rect x="5" y="11" width="1" height="1" fill="#808080"/><rect x="14" y="11" width="1" height="1" fill="#808080"/><rect x="15" y="11" width="1" height="1" fill="#ffffff"/><rect x="6" y="12" width="1" height="1" fill="#808080"/><rect x="13" y="12" width="1" height="1" fill="#808080"/><rect x="14" y="12" width="1" height="1" fill="#ffffff"/><rect x="6" y="13" width="1" height="1" fill="#808080"/><rect x="7" y="13" width="1" height="1" fill="#ffffff"/><rect x="12" y="13" width="1" height="1" fill="#808080"/><rect x="13" y="13" width="1" height="1" fill="#ffffff"/><rect x="6" y="14" width="1" height="1" fill="#808080"/><rect x="7" y="14" width="1" height="1" fill="#ffffff"/><rect x="12" y="14" width="1" height="1" fill="#808080"/><rect x="13" y="14" width="1" height="1" fill="#ffffff"/><rect x="6" y="15" width="7" height="1" fill="#808080"/><rect x="13" y="15" width="1" height="1" fill="#ffffff"/><rect x="7" y="16" width="7" height="1" fill="#ffffff"/></g>
<g transform="translate(801,26)"><path d="M3 6 A5 5 0 1 1 7 13" stroke="#808000" stroke-width="1.5" fill="none"/><path d="M3 6 A5 5 0 0 1 11 3" stroke="#000" stroke-width="1.5" fill="none"/><path d="M1 3 L3 8 L6 5 Z" fill="#000"/><path d="M7 13 A5 5 0 0 0 12 10" stroke="#000" stroke-width="1.5" fill="none"/></g>
<g transform="translate(824,26)"><g transform="translate(1,1)"><path d="M13 6 A5 5 0 1 0 9 13 M15 3 L13 8 L10 5 Z" stroke="#fff" stroke-width="1.3" fill="none"/></g><path d="M13 6 A5 5 0 1 0 9 13 M15 3 L13 8 L10 5 Z" stroke="#808080" stroke-width="1.3" fill="none"/></g>
<g transform="translate(847,26)"><g transform="translate(1,1)"><path d="M1 15 V9 H5 M1 12 H4 M1 15 H5 M6 15 V10 H14 V14 M10 10 V14 M3 6 Q8 0 13 4 M11 4 H13 V2" stroke="#fff" stroke-width="1.3" fill="none"/></g><path d="M1 15 V9 H5 M1 12 H4 M1 15 H5 M6 15 V10 H14 V14 M10 10 V14 M3 6 Q8 0 13 4 M11 4 H13 V2" stroke="#808080" stroke-width="1.3" fill="none"/></g>
<g transform="translate(870,26)"><g transform="translate(1,1)"><path d="M2 15 V9 H5 M2 12 H4 M2 15 H5 M11 9 H14 V15 H11 M12 12 H14 M3 6 Q8 0 13 4 M11 4 H13 V2" stroke="#fff" stroke-width="1.3" fill="none"/></g><path d="M2 15 V9 H5 M2 12 H4 M2 15 H5 M11 9 H14 V15 H11 M12 12 H14 M3 6 Q8 0 13 4 M11 4 H13 V2" stroke="#808080" stroke-width="1.3" fill="none"/></g>
<g transform="translate(893,26)"><g transform="translate(1,1)"><path d="M1 14 L7 2 L8 13 M4 9 H8 M10 10 Q11 7 14 8 L13 13 Q10 14 10 11 Q12 9 14 10" stroke="#fff" stroke-width="1.3" fill="none"/></g><path d="M1 14 L7 2 L8 13 M4 9 H8 M10 10 Q11 7 14 8 L13 13 Q10 14 10 11 Q12 9 14 10" stroke="#808080" stroke-width="1.3" fill="none"/></g>
<g transform="translate(916,26)"><g transform="translate(1,1)"><path d="M1.5 11 V12 M4.5 6.5 H7.5 V9.5 H4.5 Z M9.5 6.5 H13.5 V9.5 H9.5 M10.5 6.5 V14 L9 15" stroke="#fff" stroke-width="1.3" fill="none"/></g><path d="M1.5 11 V12 M4.5 6.5 H7.5 V9.5 H4.5 Z M9.5 6.5 H13.5 V9.5 H9.5 M10.5 6.5 V14 L9 15" stroke="#808080" stroke-width="1.3" fill="none"/></g>
<rect x="0" y="70" width="1678" height="1" fill="#ffffff"/>
<rect x="0" y="70" width="1" height="6" fill="#ffffff"/>
<rect x="1677" y="70" width="1" height="6" fill="#404040"/>
<rect x="4" y="51" width="87" height="1" fill="#ffffff"/>
<rect x="3" y="52" width="1" height="1" fill="#ffffff"/>
<rect x="2" y="53" width="1" height="17" fill="#ffffff"/>
<text class="" x="29" y="65" font-size="11" fill="#000" font-weight="normal" text-anchor="start" letter-spacing="0.2">Draft33.asc</text>
<rect x="91" y="70" width="96" height="1" fill="#d4d0c8"/>
<rect x="93" y="49" width="93" height="1" fill="#ffffff"/>
<rect x="92" y="50" width="1" height="1" fill="#ffffff"/>
<rect x="91" y="51" width="1" height="20" fill="#ffffff"/>
<rect x="186" y="50" width="1" height="1" fill="#404040"/>
<rect x="186" y="51" width="1" height="19" fill="#808080"/>
<rect x="187" y="51" width="1" height="20" fill="#404040"/>
<text class="" x="120" y="64" font-size="11" fill="#000" font-weight="normal" text-anchor="start" letter-spacing="0.3">Draft33.raw</text>
<rect x="0" y="76" width="1678" height="1" fill="#808080"/>
<rect x="0" y="77" width="1678" height="1" fill="#404040"/>
<rect x="0" y="76" width="1" height="934" fill="#808080"/>
<rect x="1" y="77" width="1" height="932" fill="#404040"/>
<rect x="1676" y="77" width="1" height="932" fill="#d4d0c8"/>
<rect x="1677" y="76" width="1" height="934" fill="#ffffff"/>
<rect x="1" y="1008" width="1676" height="1" fill="#d4d0c8"/>
<rect x="0" y="1009" width="1678" height="1" fill="#ffffff"/>
<rect x="2" y="78" width="1674" height="1" fill="#d4d0c8"/>
<rect x="2" y="78" width="1" height="465" fill="#d4d0c8"/>
<rect x="2" y="542" width="1674" height="1" fill="#404040"/>
<rect x="1675" y="78" width="1" height="465" fill="#404040"/>
<rect x="3" y="79" width="1672" height="1" fill="#ffffff"/>
<rect x="3" y="79" width="1" height="463" fill="#ffffff"/>
<rect x="3" y="541" width="1672" height="1" fill="#808080"/>
<rect x="1674" y="79" width="1" height="463" fill="#808080"/>
<rect x="6" y="82" width="1666" height="18" fill="#808080"/>
<text class="" x="26" y="96" font-size="11" fill="#d4d0c8" font-weight="bold" text-anchor="start" letter-spacing="0.55" stroke="#d4d0c8" stroke-width="0.3">Draft33.raw</text>
<g transform="translate(0,83)"><rect x="8" y="0" width="16" height="1" fill="#c0c0c0"/><rect x="8" y="1" width="4" height="1" fill="#c0c0c0"/><rect x="12" y="1" width="2" height="1" fill="#0000ff"/><rect x="14" y="1" width="5" height="1" fill="#c0c0c0"/><rect x="19" y="1" width="2" height="1" fill="#0000ff"/><rect x="21" y="1" width="3" height="1" fill="#c0c0c0"/><rect x="8" y="2" width="3" height="1" fill="#c0c0c0"/><rect x="11" y="2" width="1" height="1" fill="#0000ff"/><rect x="12" y="2" width="2" height="1" fill="#c0c0c0"/><rect x="14" y="2" width="1" height="1" fill="#0000ff"/><rect x="15" y="2" width="3" height="1" fill="#c0c0c0"/><rect x="18" y="2" width="1" height="1" fill="#0000ff"/><rect x="19" y="2" width="2" height="1" fill="#c0c0c0"/><rect x="21" y="2" width="1" height="1" fill="#0000ff"/><rect x="22" y="2" width="2" height="1" fill="#c0c0c0"/><rect x="8" y="3" width="2" height="1" fill="#c0c0c0"/><rect x="10" y="3" width="1" height="1" fill="#0000ff"/><rect x="11" y="3" width="4" height="1" fill="#c0c0c0"/><rect x="15" y="3" width="1" height="1" fill="#0000ff"/><rect x="16" y="3" width="1" height="1" fill="#c0c0c0"/><rect x="17" y="3" width="1" height="1" fill="#0000ff"/><rect x="18" y="3" width="4" height="1" fill="#c0c0c0"/><rect x="22" y="3" width="1" height="1" fill="#0000ff"/><rect x="23" y="3" width="1" height="1" fill="#c0c0c0"/><rect x="8" y="4" width="1" height="1" fill="#000"/><rect x="9" y="4" width="1" height="1" fill="#0000ff"/><rect x="10" y="4" width="6" height="1" fill="#c0c0c0"/><rect x="16" y="4" width="1" height="1" fill="#0000ff"/><rect x="17" y="4" width="6" height="1" fill="#c0c0c0"/><rect x="23" y="4" width="1" height="1" fill="#0000ff"/><rect x="8" y="5" width="16" height="1" fill="#c0c0c0"/><rect x="8" y="6" width="16" height="1" fill="#c0c0c0"/><rect x="8" y="7" width="2" height="1" fill="#c0c0c0"/><rect x="10" y="7" width="3" height="1" fill="#ff0000"/><rect x="13" y="7" width="11" height="1" fill="#c0c0c0"/><rect x="8" y="8" width="7" height="1" fill="#c0c0c0"/><rect x="15" y="8" width="1" height="1" fill="#ff0000"/><rect x="16" y="8" width="8" height="1" fill="#c0c0c0"/><rect x="8" y="9" width="1" height="1" fill="#000"/><rect x="9" y="9" width="10" height="1" fill="#c0c0c0"/><rect x="19" y="9" width="2" height="1" fill="#ff0000"/><rect x="21" y="9" width="3" height="1" fill="#c0c0c0"/><rect x="8" y="10" width="16" height="1" fill="#c0c0c0"/><rect x="8" y="11" width="16" height="1" fill="#c0c0c0"/><rect x="8" y="12" width="5" height="1" fill="#c0c0c0"/><rect x="13" y="12" width="1" height="1" fill="#0000ff"/><rect x="14" y="12" width="5" height="1" fill="#c0c0c0"/><rect x="19" y="12" width="1" height="1" fill="#0000ff"/><rect x="20" y="12" width="4" height="1" fill="#c0c0c0"/><rect x="8" y="13" width="16" height="1" fill="#c0c0c0"/><rect x="8" y="14" width="1" height="1" fill="#000"/><rect x="9" y="14" width="3" height="1" fill="#fff"/><rect x="12" y="14" width="1" height="1" fill="#000"/><rect x="13" y="14" width="3" height="1" fill="#fff"/><rect x="16" y="14" width="1" height="1" fill="#000"/><rect x="17" y="14" width="3" height="1" fill="#fff"/><rect x="20" y="14" width="2" height="1" fill="#000"/><rect x="22" y="14" width="1" height="1" fill="#fff"/><rect x="23" y="14" width="1" height="1" fill="#000"/><rect x="8" y="15" width="16" height="1" fill="#000"/></g>
<rect x="1620" y="84" width="16" height="14" fill="#404040"/>
<rect x="1620" y="84" width="15" height="13" fill="#ffffff"/>
<rect x="1621" y="85" width="14" height="12" fill="#808080"/>
<rect x="1621" y="85" width="13" height="11" fill="#d4d0c8"/>
<rect x="1636" y="84" width="16" height="14" fill="#404040"/>
<rect x="1636" y="84" width="15" height="13" fill="#ffffff"/>
<rect x="1637" y="85" width="14" height="12" fill="#808080"/>
<rect x="1637" y="85" width="13" height="11" fill="#d4d0c8"/>
<rect x="1654" y="84" width="16" height="14" fill="#404040"/>
<rect x="1654" y="84" width="15" height="13" fill="#ffffff"/>
<rect x="1655" y="85" width="14" height="12" fill="#808080"/>
<rect x="1655" y="85" width="13" height="11" fill="#d4d0c8"/>
<rect x="1624" y="93" width="6" height="2" fill="#000"/>
<rect x="1638" y="86" width="10" height="9" fill="#000"/>
<rect x="1639" y="88" width="8" height="6" fill="#d4d0c8"/>
<path d="M1658.5 87.5 L1665.5 93.5 M1665.5 87.5 L1658.5 93.5" stroke="#000" stroke-width="2" fill="none" />
<rect x="6" y="101" width="1666" height="1" fill="#808080"/>
<rect x="6" y="101" width="1" height="438" fill="#808080"/>
<rect x="7" y="102" width="1664" height="1" fill="#404040"/>
<rect x="7" y="102" width="1" height="436" fill="#404040"/>
<rect x="6" y="537" width="1666" height="2" fill="#ffffff"/>
<rect x="1670" y="101" width="2" height="438" fill="#ffffff"/>
<rect x="8" y="103" width="1662" height="434" fill="#000"/>
<rect x="2" y="543" width="1674" height="1" fill="#d4d0c8"/>
<rect x="2" y="543" width="1" height="465" fill="#d4d0c8"/>
<rect x="2" y="1007" width="1674" height="1" fill="#404040"/>
<rect x="1675" y="543" width="1" height="465" fill="#404040"/>
<rect x="3" y="544" width="1672" height="1" fill="#ffffff"/>
<rect x="3" y="544" width="1" height="463" fill="#ffffff"/>
<rect x="3" y="1006" width="1672" height="1" fill="#808080"/>
<rect x="1674" y="544" width="1" height="463" fill="#808080"/>
<rect x="6" y="547" width="1666" height="18" fill="#808080"/>
<text class="" x="26" y="561" font-size="11" fill="#d4d0c8" font-weight="bold" text-anchor="start" letter-spacing="0.55" stroke="#d4d0c8" stroke-width="0.3">Draft33.asc</text>
<g transform="translate(6,548) translate(0,-1)"><rect x="12" y="2" width="1" height="1" fill="#000"/><rect x="11" y="3" width="1" height="1" fill="#000"/><rect x="10" y="4" width="1" height="1" fill="#000"/><rect x="7" y="5" width="3" height="1" fill="#000"/><rect x="7" y="6" width="2" height="6" fill="#000"/><rect x="2" y="8" width="5" height="1" fill="#000"/><rect x="11" y="11" width="1" height="1" fill="#000"/><rect x="10" y="12" width="2" height="1" fill="#000"/><rect x="11" y="13" width="2" height="1" fill="#000"/></g>
<rect x="1620" y="549" width="16" height="14" fill="#404040"/>
<rect x="1620" y="549" width="15" height="13" fill="#ffffff"/>
<rect x="1621" y="550" width="14" height="12" fill="#808080"/>
<rect x="1621" y="550" width="13" height="11" fill="#d4d0c8"/>
<rect x="1636" y="549" width="16" height="14" fill="#404040"/>
<rect x="1636" y="549" width="15" height="13" fill="#ffffff"/>
<rect x="1637" y="550" width="14" height="12" fill="#808080"/>
<rect x="1637" y="550" width="13" height="11" fill="#d4d0c8"/>
<rect x="1654" y="549" width="16" height="14" fill="#404040"/>
<rect x="1654" y="549" width="15" height="13" fill="#ffffff"/>
<rect x="1655" y="550" width="14" height="12" fill="#808080"/>
<rect x="1655" y="550" width="13" height="11" fill="#d4d0c8"/>
<rect x="1624" y="558" width="6" height="2" fill="#000"/>
<rect x="1638" y="551" width="10" height="9" fill="#000"/>
<rect x="1639" y="553" width="8" height="6" fill="#d4d0c8"/>
<path d="M1658.5 552.5 L1665.5 558.5 M1665.5 552.5 L1658.5 558.5" stroke="#000" stroke-width="2" fill="none" />
<rect x="6" y="566" width="1666" height="1" fill="#808080"/>
<rect x="6" y="566" width="1" height="438" fill="#808080"/>
<rect x="7" y="567" width="1664" height="1" fill="#404040"/>
<rect x="7" y="567" width="1" height="436" fill="#404040"/>
<rect x="6" y="1002" width="1666" height="2" fill="#ffffff"/>
<rect x="1670" y="566" width="2" height="438" fill="#ffffff"/>
<rect x="8" y="568" width="1662" height="434" fill="#000"/>
<g shape-rendering="crispEdges">
<line x1="44" y1="144.5" x2="1652" y2="144.5" stroke="#808080" stroke-dasharray="4 4"/>
<line x1="44" y1="167.5" x2="1652" y2="167.5" stroke="#808080" stroke-dasharray="4 4"/>
<line x1="44" y1="190.5" x2="1652" y2="190.5" stroke="#808080" stroke-dasharray="4 4"/>
<line x1="44" y1="213.5" x2="1652" y2="213.5" stroke="#808080" stroke-dasharray="4 4"/>
<line x1="205.5" y1="121" x2="205.5" y2="236" stroke="#808080" stroke-dasharray="4 4"/>
<line x1="366.5" y1="121" x2="366.5" y2="236" stroke="#808080" stroke-dasharray="4 4"/>
<line x1="526.5" y1="121" x2="526.5" y2="236" stroke="#808080" stroke-dasharray="4 4"/>
<line x1="687.5" y1="121" x2="687.5" y2="236" stroke="#808080" stroke-dasharray="4 4"/>
<line x1="848.5" y1="121" x2="848.5" y2="236" stroke="#808080" stroke-dasharray="4 4"/>
<line x1="1009.5" y1="121" x2="1009.5" y2="236" stroke="#808080" stroke-dasharray="4 4"/>
<line x1="1170.5" y1="121" x2="1170.5" y2="236" stroke="#808080" stroke-dasharray="4 4"/>
<line x1="1330.5" y1="121" x2="1330.5" y2="236" stroke="#808080" stroke-dasharray="4 4"/>
<line x1="1491.5" y1="121" x2="1491.5" y2="236" stroke="#808080" stroke-dasharray="4 4"/>
<rect x="44.5" y="121.5" width="1608" height="115" fill="none" stroke="#a4a4a4"/>
<rect x="36" y="121" width="8" height="1" fill="#a4a4a4"/>
<text class="c" x="36.5" y="126" font-size="14" fill="#c0c0c0" font-weight="normal" text-anchor="end" >1.0V</text>
<rect x="36" y="144" width="8" height="1" fill="#a4a4a4"/>
<text class="c" x="36.5" y="149" font-size="14" fill="#c0c0c0" font-weight="normal" text-anchor="end" >0.8V</text>
<rect x="36" y="167" width="8" height="1" fill="#a4a4a4"/>
<text class="c" x="36.5" y="172" font-size="14" fill="#c0c0c0" font-weight="normal" text-anchor="end" >0.6V</text>
<rect x="36" y="190" width="8" height="1" fill="#a4a4a4"/>
<text class="c" x="36.5" y="195" font-size="14" fill="#c0c0c0" font-weight="normal" text-anchor="end" >0.4V</text>
<rect x="36" y="213" width="8" height="1" fill="#a4a4a4"/>
<text class="c" x="36.5" y="218" font-size="14" fill="#c0c0c0" font-weight="normal" text-anchor="end" >0.2V</text>
<rect x="36" y="236" width="8" height="1" fill="#a4a4a4"/>
<text class="c" x="36.5" y="241" font-size="14" fill="#c0c0c0" font-weight="normal" text-anchor="end" >0.0V</text>
<line x1="44" y1="280.5" x2="1652" y2="280.5" stroke="#808080" stroke-dasharray="4 4"/>
<line x1="44" y1="303.5" x2="1652" y2="303.5" stroke="#808080" stroke-dasharray="4 4"/>
<line x1="44" y1="326.5" x2="1652" y2="326.5" stroke="#808080" stroke-dasharray="4 4"/>
<line x1="44" y1="349.5" x2="1652" y2="349.5" stroke="#808080" stroke-dasharray="4 4"/>
<line x1="205.5" y1="257" x2="205.5" y2="372" stroke="#808080" stroke-dasharray="4 4"/>
<line x1="366.5" y1="257" x2="366.5" y2="372" stroke="#808080" stroke-dasharray="4 4"/>
<line x1="526.5" y1="257" x2="526.5" y2="372" stroke="#808080" stroke-dasharray="4 4"/>
<line x1="687.5" y1="257" x2="687.5" y2="372" stroke="#808080" stroke-dasharray="4 4"/>
<line x1="848.5" y1="257" x2="848.5" y2="372" stroke="#808080" stroke-dasharray="4 4"/>
<line x1="1009.5" y1="257" x2="1009.5" y2="372" stroke="#808080" stroke-dasharray="4 4"/>
<line x1="1170.5" y1="257" x2="1170.5" y2="372" stroke="#808080" stroke-dasharray="4 4"/>
<line x1="1330.5" y1="257" x2="1330.5" y2="372" stroke="#808080" stroke-dasharray="4 4"/>
<line x1="1491.5" y1="257" x2="1491.5" y2="372" stroke="#808080" stroke-dasharray="4 4"/>
<rect x="44.5" y="257.5" width="1608" height="115" fill="none" stroke="#a4a4a4"/>
<rect x="36" y="257" width="8" height="1" fill="#a4a4a4"/>
<text class="c" x="36.5" y="262" font-size="14" fill="#c0c0c0" font-weight="normal" text-anchor="end" >1.0V</text>
<rect x="36" y="280" width="8" height="1" fill="#a4a4a4"/>
<text class="c" x="36.5" y="285" font-size="14" fill="#c0c0c0" font-weight="normal" text-anchor="end" >0.8V</text>
<rect x="36" y="303" width="8" height="1" fill="#a4a4a4"/>
<text class="c" x="36.5" y="308" font-size="14" fill="#c0c0c0" font-weight="normal" text-anchor="end" >0.6V</text>
<rect x="36" y="326" width="8" height="1" fill="#a4a4a4"/>
<text class="c" x="36.5" y="331" font-size="14" fill="#c0c0c0" font-weight="normal" text-anchor="end" >0.4V</text>
<rect x="36" y="349" width="8" height="1" fill="#a4a4a4"/>
<text class="c" x="36.5" y="354" font-size="14" fill="#c0c0c0" font-weight="normal" text-anchor="end" >0.2V</text>
<rect x="36" y="372" width="8" height="1" fill="#a4a4a4"/>
<text class="c" x="36.5" y="377" font-size="14" fill="#c0c0c0" font-weight="normal" text-anchor="end" >0.0V</text>
<line x1="44" y1="417.5" x2="1652" y2="417.5" stroke="#808080" stroke-dasharray="4 4"/>
<line x1="44" y1="440.5" x2="1652" y2="440.5" stroke="#808080" stroke-dasharray="4 4"/>
<line x1="44" y1="464.5" x2="1652" y2="464.5" stroke="#808080" stroke-dasharray="4 4"/>
<line x1="44" y1="487.5" x2="1652" y2="487.5" stroke="#808080" stroke-dasharray="4 4"/>
<line x1="205.5" y1="393" x2="205.5" y2="511" stroke="#808080" stroke-dasharray="4 4"/>
<line x1="366.5" y1="393" x2="366.5" y2="511" stroke="#808080" stroke-dasharray="4 4"/>
<line x1="526.5" y1="393" x2="526.5" y2="511" stroke="#808080" stroke-dasharray="4 4"/>
<line x1="687.5" y1="393" x2="687.5" y2="511" stroke="#808080" stroke-dasharray="4 4"/>
<line x1="848.5" y1="393" x2="848.5" y2="511" stroke="#808080" stroke-dasharray="4 4"/>
<line x1="1009.5" y1="393" x2="1009.5" y2="511" stroke="#808080" stroke-dasharray="4 4"/>
<line x1="1170.5" y1="393" x2="1170.5" y2="511" stroke="#808080" stroke-dasharray="4 4"/>
<line x1="1330.5" y1="393" x2="1330.5" y2="511" stroke="#808080" stroke-dasharray="4 4"/>
<line x1="1491.5" y1="393" x2="1491.5" y2="511" stroke="#808080" stroke-dasharray="4 4"/>
<rect x="44.5" y="393.5" width="1608" height="118" fill="none" stroke="#a4a4a4"/>
<rect x="36" y="393" width="8" height="1" fill="#a4a4a4"/>
<text class="c" x="36.5" y="398" font-size="14" fill="#c0c0c0" font-weight="normal" text-anchor="end" >1.0V</text>
<rect x="36" y="417" width="8" height="1" fill="#a4a4a4"/>
<text class="c" x="36.5" y="422" font-size="14" fill="#c0c0c0" font-weight="normal" text-anchor="end" >0.8V</text>
<rect x="36" y="440" width="8" height="1" fill="#a4a4a4"/>
<text class="c" x="36.5" y="445" font-size="14" fill="#c0c0c0" font-weight="normal" text-anchor="end" >0.6V</text>
<rect x="36" y="464" width="8" height="1" fill="#a4a4a4"/>
<text class="c" x="36.5" y="469" font-size="14" fill="#c0c0c0" font-weight="normal" text-anchor="end" >0.4V</text>
<rect x="36" y="487" width="8" height="1" fill="#a4a4a4"/>
<text class="c" x="36.5" y="492" font-size="14" fill="#c0c0c0" font-weight="normal" text-anchor="end" >0.2V</text>
<rect x="36" y="511" width="8" height="1" fill="#a4a4a4"/>
<text class="c" x="36.5" y="516" font-size="14" fill="#c0c0c0" font-weight="normal" text-anchor="end" >0.0V</text>
</g>
<g shape-rendering="crispEdges" fill="none" stroke-width="1">
<path d="M44.5 237 L44.5 121.5 L366.5 121.5 L366.5 236.5 L687.5 236.5 L687.5 121.5 L1009.5 121.5 L1009.5 236.5 L1330.5 236.5 L1330.5 121.5 L1652.5 121.5" stroke="#0000ff"/>
<path d="M44 372.5 L65.5 372.5 L65.5 358.5 L66.5 358.5 L66.5 329.5 L67.5 329.5 L67.5 301.5 L68.5 301.5 L68.5 279.5 L69.5 279.5 L69.5 265.5 L70.5 265.5 L70.5 257.5 L366.5 257.5 L366.5 372.5 L708.5 372.5 L708.5 364.5 L709.5 364.5 L709.5 351.5 L710.5 351.5 L710.5 315.5 L711.5 315.5 L711.5 279.5 L712.5 279.5 L712.5 265.5 L713.5 265.5 L713.5 257.5 L1009.5 257.5 L1009.5 372.5 L1351.5 372.5 L1351.5 365.5 L1352.5 365.5 L1352.5 351.5 L1353.5 351.5 L1353.5 315.5 L1354.5 315.5 L1354.5 279.5 L1355.5 279.5 L1355.5 265.5 L1356.5 265.5 L1356.5 257.5 L1652.5 257.5" stroke="#00ff00"/>
<path d="M44.5 512 L44.5 393.5 L387.5 393.5 L387.5 407.5 L388.5 407.5 L388.5 438.5 L389.5 438.5 L389.5 468.5 L390.5 468.5 L390.5 497.5 L391.5 497.5 L391.5 511.5 L687.5 511.5 L687.5 393.5 L1030.5 393.5 L1030.5 408.5 L1031.5 408.5 L1031.5 438.5 L1032.5 438.5 L1032.5 468.5 L1033.5 468.5 L1033.5 490.5 L1034.5 490.5 L1034.5 504.5 L1035.5 504.5 L1035.5 511.5 L1330.5 511.5 L1330.5 393.5 L1652.5 393.5" stroke="#ff0000"/>
</g>
<rect x="44" y="511" width="1" height="8" fill="#a4a4a4"/>
<rect x="205" y="511" width="1" height="8" fill="#a4a4a4"/>
<rect x="366" y="511" width="1" height="8" fill="#a4a4a4"/>
<rect x="526" y="511" width="1" height="8" fill="#a4a4a4"/>
<rect x="687" y="511" width="1" height="8" fill="#a4a4a4"/>
<rect x="848" y="511" width="1" height="8" fill="#a4a4a4"/>
<rect x="1009" y="511" width="1" height="8" fill="#a4a4a4"/>
<rect x="1170" y="511" width="1" height="8" fill="#a4a4a4"/>
<rect x="1330" y="511" width="1" height="8" fill="#a4a4a4"/>
<rect x="1491" y="511" width="1" height="8" fill="#a4a4a4"/>
<text class="c" x="44.5" y="532" font-size="14" fill="#c0c0c0" font-weight="normal" text-anchor="middle" >0.0μs</text>
<text class="c" x="205.5" y="532" font-size="14" fill="#c0c0c0" font-weight="normal" text-anchor="middle" >0.5μs</text>
<text class="c" x="366.5" y="532" font-size="14" fill="#c0c0c0" font-weight="normal" text-anchor="middle" >1.0μs</text>
<text class="c" x="526.5" y="532" font-size="14" fill="#c0c0c0" font-weight="normal" text-anchor="middle" >1.5μs</text>
<text class="c" x="687.5" y="532" font-size="14" fill="#c0c0c0" font-weight="normal" text-anchor="middle" >2.0μs</text>
<text class="c" x="848.5" y="532" font-size="14" fill="#c0c0c0" font-weight="normal" text-anchor="middle" >2.5μs</text>
<text class="c" x="1009.5" y="532" font-size="14" fill="#c0c0c0" font-weight="normal" text-anchor="middle" >3.0μs</text>
<text class="c" x="1170.5" y="532" font-size="14" fill="#c0c0c0" font-weight="normal" text-anchor="middle" >3.5μs</text>
<text class="c" x="1330.5" y="532" font-size="14" fill="#c0c0c0" font-weight="normal" text-anchor="middle" >4.0μs</text>
<text class="c" x="1491.5" y="532" font-size="14" fill="#c0c0c0" font-weight="normal" text-anchor="middle" >4.5μs</text>
<text class="c" x="848" y="115" font-size="13" fill="#0000ff" font-weight="bold" text-anchor="middle" >V(n001)</text>
<text class="c" x="848" y="251" font-size="13" fill="#00ff00" font-weight="bold" text-anchor="middle" >V(n002)</text>
<text class="c" x="848" y="387" font-size="13" fill="#ff0000" font-weight="bold" text-anchor="middle" >V(n005)</text>
<g shape-rendering="crispEdges"><text class="c" x="661" y="761" font-size="27" font-weight="bold" fill="#ff6e00" letter-spacing="0.6">V1</text><text class="c" x="791" y="713" font-size="27" font-weight="bold" fill="#ff6e00" letter-spacing="0.6">R1</text><text class="c" x="791" y="757" font-size="27" font-weight="bold" fill="#ff6e00" letter-spacing="0.6">100</text><text class="c" x="872" y="761" font-size="27" font-weight="bold" fill="#ff6e00" letter-spacing="0.6">A1</text><text class="c" x="776" y="809" font-size="27" font-weight="bold" fill="#ff6e00" letter-spacing="0.6">C1</text><text class="c" x="777" y="877" font-size="27" font-weight="bold" fill="#ff6e00" letter-spacing="0.6">1n</text><text class="c" x="1131" y="713" font-size="27" font-weight="bold" fill="#ff6e00" letter-spacing="0.6">A2</text><text class="c" x="1101" y="829" font-size="27" font-weight="bold" fill="#ff6e00" letter-spacing="0.6">A3</text><text class="c" x="570" y="942" font-size="27" font-weight="bold" fill="#ff6e00" letter-spacing="0.6">PULSE(0 1 0 1n 1n 1u 2u)</text><text class="c" x="569" y="967" font-size="27" font-weight="bold" fill="#ff6e00" letter-spacing="0.6">.tran 5u</text><rect x="633" y="655" width="345" height="1" fill="#d4d4d4"/><rect x="633" y="655" width="1" height="107" fill="#d4d4d4"/><rect x="767" y="655" width="1" height="31" fill="#d4d4d4"/><rect x="767" y="760" width="1" height="64" fill="#d4d4d4"/><rect x="767" y="833" width="1" height="35" fill="#d4d4d4"/><rect x="940" y="655" width="1" height="78" fill="#d4d4d4"/><rect x="940" y="732" width="135" height="1" fill="#d4d4d4"/><rect x="1133" y="732" width="77" height="1" fill="#d4d4d4"/><rect x="767" y="790" width="97" height="1" fill="#d4d4d4"/><rect x="910" y="790" width="166" height="1" fill="#d4d4d4"/><rect x="997" y="732" width="1" height="136" fill="#d4d4d4"/><rect x="997" y="867" width="89" height="1" fill="#d4d4d4"/><rect x="1127" y="867" width="83" height="1" fill="#d4d4d4"/><rect x="1055" y="790" width="1" height="58" fill="#d4d4d4"/><rect x="1055" y="847" width="22" height="1" fill="#d4d4d4"/><rect x="633" y="837" width="1" height="11" fill="#d4d4d4"/><path d="M767.5 685.5 L786.2 694.5 L748.8 713.5 L786.2 732.5 L748.8 751.5 L767.5 761" stroke="#d4d4d4" stroke-width="1" fill="none"/><rect x="748" y="823" width="40" height="1" fill="#d4d4d4"/><rect x="748" y="833" width="40" height="1" fill="#d4d4d4"/><circle cx="633" cy="799.5" r="38.5" stroke="#d4d4d4" stroke-width="1" fill="none"/><rect x="623" y="775" width="20" height="1" fill="#d4d4d4"/><rect x="633" y="766" width="1" height="20" fill="#d4d4d4"/><rect x="623" y="823" width="20" height="1" fill="#d4d4d4"/><path d="M612.5 847.5 H654.5 L633.5 869.5 Z" stroke="#d4f8cc" stroke-width="1" fill="none"/><path d="M746.5 867.5 H788.5 L767.5 889.5 Z" stroke="#d4f8cc" stroke-width="1" fill="none"/><path d="M842.5 809.5 H884.5 L863.5 831.5 Z" stroke="#d4f8cc" stroke-width="1" fill="none"/><path d="M1073.5 790.5 H1115.5 L1094.5 812.5 Z" stroke="#d4f8cc" stroke-width="1" fill="none"/><path d="M1073.5 924.5 H1115.5 L1094.5 946.5 Z" stroke="#d4f8cc" stroke-width="1" fill="none"/><path d="M863.5 771.5 L911 790.5 L863.5 809.5 Z" stroke="#d4d4d4" stroke-width="1" fill="none"/><path d="M1103.5 713.5 H1074.5 V790.5 H1103.5 L1122 782 L1131 772 L1135.5 761 L1137.5 751.5 L1135.5 742 L1133 733 L1121 719.5 Z" stroke="#d4d4d4" stroke-width="1" fill="none"/><circle cx="1141.5" cy="770.5" r="9" stroke="#d4d4d4" stroke-width="1" fill="#000"/><path d="M1076.5 847.5 L1083.5 860 L1086 868 L1089 877.5 L1089.5 886.5 L1088.5 898 L1086 908.5 L1085 912 L1076.5 924.5 L1093.5 923.5 L1105 919 L1114.5 915.5 L1121 912 L1125 908.5 L1131 903 L1135.5 896 L1141.5 886.5 L1135 874 L1129 868 L1125 864.5 L1115.5 857 L1101.5 851 L1093 848.5 L1084.5 847.5 Z" stroke="#d4d4d4" stroke-width="1" fill="none"/><circle cx="1141.5" cy="905" r="9.2" stroke="#d4d4d4" stroke-width="1" fill="#000"/><rect x="1074" y="886" width="16" height="1" fill="#d4d4d4"/><rect x="1074" y="905" width="12" height="1" fill="#d4d4d4"/><rect x="762" y="650" width="11" height="11" fill="#dcdcdc"/><rect x="935" y="650" width="11" height="11" fill="#dcdcdc"/><rect x="762" y="785" width="11" height="11" fill="#dcdcdc"/><rect x="992" y="727" width="11" height="11" fill="#dcdcdc"/><rect x="1050" y="785" width="11" height="11" fill="#dcdcdc"/><rect x="1071.5" y="709.5" width="7" height="7" stroke="#00e000" stroke-width="1" fill="none"/><rect x="1071.5" y="748.5" width="7" height="7" stroke="#00e000" stroke-width="1" fill="none"/><rect x="1071.5" y="767.5" width="7" height="7" stroke="#00e000" stroke-width="1" fill="none"/><rect x="1148.5" y="767.5" width="7" height="7" stroke="#00e000" stroke-width="1" fill="none"/><rect x="1071.5" y="882.5" width="7" height="7" stroke="#00e000" stroke-width="1" fill="none"/><rect x="1071.5" y="901.5" width="7" height="7" stroke="#00e000" stroke-width="1" fill="none"/><rect x="1071.5" y="921.5" width="7" height="7" stroke="#00e000" stroke-width="1" fill="none"/><rect x="1148.5" y="901.5" width="7" height="7" stroke="#00e000" stroke-width="1" fill="none"/></g>
<text class="" x="3" y="1026" font-size="11" fill="#000" font-weight="normal" text-anchor="start" letter-spacing="0.1">x = 4.863μs</text>
<text class="" x="73" y="1026" font-size="11" fill="#000" font-weight="normal" text-anchor="start" letter-spacing="0.1">y = 0.122V</text>
<rect x="1627" y="1013" width="51" height="1" fill="#808080"/>
<rect x="1627" y="1013" width="1" height="16" fill="#808080"/>
<rect x="1628" y="1028" width="50" height="1" fill="#ffffff"/>
<path d="M1665 1029 L1678 1016" stroke="#808080" stroke-width="2" shape-rendering="crispEdges"/>
<path d="M1667 1029 L1678 1018" stroke="#ffffff" stroke-width="1" shape-rendering="crispEdges"/>
<path d="M1669 1029 L1678 1020" stroke="#808080" stroke-width="2" shape-rendering="crispEdges"/>
<path d="M1671 1029 L1678 1022" stroke="#ffffff" stroke-width="1" shape-rendering="crispEdges"/>
<path d="M1673 1029 L1678 1024" stroke="#808080" stroke-width="2" shape-rendering="crispEdges"/>
<path d="M1675 1029 L1678 1026" stroke="#ffffff" stroke-width="1" shape-rendering="crispEdges"/>
</svg></body></html>
